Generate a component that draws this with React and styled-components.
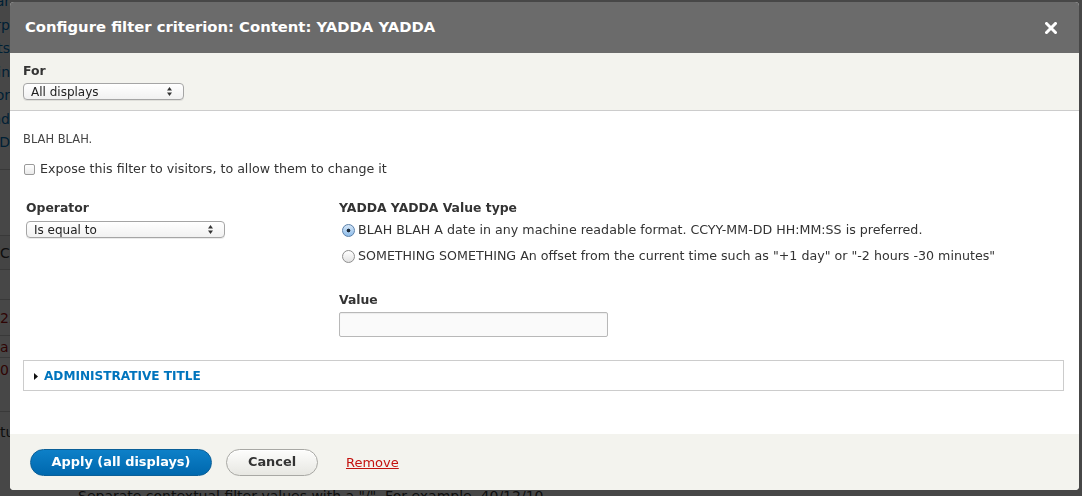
import React from 'react';
import styled, { createGlobalStyle } from 'styled-components';

const font = `"DejaVu Sans", "Noto Sans", "Liberation Sans", sans-serif`;

const Global = createGlobalStyle`
  html, body { margin: 0; padding: 0; background: #fff; }
  body { width: 1082px; height: 496px; overflow: hidden; font-family: ${font}; color: #333; }
  * { box-sizing: border-box; }
`;

/* ---------- page behind the modal ---------- */
const Page = styled.div`
  width: 1082px;
  height: 496px;
  display: grid;
  grid-template-columns: 10px 1fr;
  background: #fff;
  overflow: hidden;
`;
const SideColumn = styled.div`
  overflow: hidden;
  display: flex;
  flex-direction: column;
  font-size: 14px;
  margin-top: -10px;
`;
const SideLink = styled.div`
  height: 23.5px;
  line-height: 23.5px;
  white-space: nowrap;
  direction: rtl;
  color: #0074bd;
`;
const SideTab = styled.div`
  margin-top: ${p => p.$top || 0}px;
  height: ${p => p.$h || 24}px;
  line-height: ${p => p.$h || 24}px;
  background: ${p => p.$bg || 'transparent'};
  border-top: 1px solid #ccc;
  white-space: nowrap;
  color: ${p => p.$color || '#333'};
  font-size: 14px;
`;
const MainColumn = styled.div`
  display: flex;
  flex-direction: column;
  justify-content: flex-end;
  padding-left: 68px;
`;
const PageNote = styled.p`
  margin: 0 0 -9px;
  font-size: 14px;
  line-height: 18px;
  color: #333;
`;

const Overlay = styled.div`
  position: fixed;
  inset: 0;
  background: rgba(0, 0, 0, 0.72);
`;

/* ---------- dialog ---------- */
const Dialog = styled.div`
  position: fixed;
  left: 10px;
  top: 2px;
  width: 1069px;
  height: 488px;
  display: flex;
  flex-direction: column;
  background: #fff;
  border-radius: 4px;
  overflow: hidden;
`;
const Header = styled.header`
  flex: none;
  height: 51px;
  background: #6b6b6b;
  display: flex;
  align-items: center;
  justify-content: space-between;
  padding: 0 22px 0 15px;
`;
const Title = styled.h1`
  margin: 0;
  color: #fff;
  font: bold 14.8px/1 ${font};
`;
const CloseButton = styled.button`
  border: 0;
  background: none;
  padding: 0;
  width: 12px;
  height: 12px;
  display: flex;
`;

const ForBar = styled.div`
  flex: none;
  height: 58px;
  background: #f3f3ee;
  border-bottom: 1px solid #ccc;
  padding: 9px 13px 0;
`;
const FieldLabel = styled.label`
  display: block;
  height: 18px;
  font: bold 12.4px/18px ${font};
  color: #333;
`;

const SelectWrap = styled.div`
  position: relative;
  margin-top: ${p => p.$mt || 0}px;
  width: ${p => p.$w}px;
  height: 17px;
`;
const Select = styled.select`
  appearance: none;
  -webkit-appearance: none;
  display: block;
  width: 100%;
  height: 17px;
  margin: 0;
  padding: 1px 20px 0 7px;
  border: 1px solid #a5a5a5;
  border-radius: 4px;
  background: linear-gradient(#ffffff, #f1f1f1);
  box-shadow: 0 1px 0 rgba(0, 0, 0, 0.08);
  font: 12px/15px ${font};
  color: #222;
  outline: none;
`;
const SelectArrows = styled.svg`
  position: absolute;
  right: 12px;
  top: 4px;
  pointer-events: none;
`;

const Body = styled.div`
  flex: 1;
  padding: 19px 14px 0 13px;
  display: flex;
  flex-direction: column;
`;
const Description = styled.p`
  margin: 0;
  font: 11.5px/18px ${font};
  color: #444;
`;
const CheckRow = styled.label`
  margin-top: 12px;
  height: 18px;
  display: flex;
  align-items: center;
  gap: 5px;
  font: 12.65px/18px ${font};
  color: #333;
`;
const Checkbox = styled.input.attrs({ type: 'checkbox' })`
  appearance: none;
  -webkit-appearance: none;
  margin: 0 0 0 1px;
  width: 11px;
  height: 11px;
  border: 1px solid #9a9a9a;
  border-radius: 2px;
  background: linear-gradient(#fff, #e9e9e9);
`;

const Columns = styled.div`
  margin-top: 21px;
  padding-left: 3px;
  display: grid;
  grid-template-columns: 313px 1fr;
`;
const Column = styled.div`
  display: flex;
  flex-direction: column;
`;
const RadioRow = styled.label`
  height: 26px;
  display: flex;
  align-items: center;
  gap: 3px;
  padding-left: 3px;
  font: 12.65px/18px ${font};
  color: #333;
  white-space: nowrap;
`;
const Radio = styled.input.attrs({ type: 'radio' })`
  appearance: none;
  -webkit-appearance: none;
  margin: 0;
  width: 13px;
  height: 13px;
  flex: none;
  border-radius: 50%;
  border: 1px solid #8e8e8e;
  background: linear-gradient(#ffffff, #e2e2e2);
  &:checked {
    border-color: #5a7fa8;
    background: radial-gradient(circle at 50% 50%, #1b2a3a 0 1.6px, transparent 2.2px),
      linear-gradient(#d4e6f8, #8fbdea);
  }
`;
const TextInput = styled.input`
  margin-top: 3px;
  width: 269px;
  height: 25px;
  border: 1px solid #b8b8b8;
  border-radius: 2px;
  background: #fafafa;
  box-shadow: inset 0 1px 1px rgba(0, 0, 0, 0.06);
  font: 13px ${font};
  padding: 0 6px;
`;
const Gap = styled.div`
  height: ${p => p.$h}px;
  flex: none;
`;

const Details = styled.details`
  margin-top: 23px;
  margin-right: 1px;
  height: 31px;
  flex: none;
  border: 1px solid #ccc;
`;
const Summary = styled.summary`
  list-style: none;
  height: 29px;
  display: flex;
  align-items: center;
  gap: 6px;
  padding: 2px 0 0 10px;
  font: bold 12.1px/1 ${font};
  color: #0074bd;
  text-transform: uppercase;
  &::-webkit-details-marker { display: none; }
`;

const Footer = styled.footer`
  flex: none;
  height: 56px;
  background: #f3f3ee;
  display: flex;
  align-items: center;
  padding: 0 20px;
`;
const Button = styled.button`
  height: 27px;
  margin-left: ${p => p.$ml || 0}px;
  width: ${p => p.$w}px;
  padding: 0;
  border-radius: 14px;
  font: bold 12.9px/1 ${font};
  border: 1px solid ${p => (p.$primary ? '#0a5f98' : '#a8a8a4')};
  color: ${p => (p.$primary ? '#fff' : '#333')};
  background: ${p =>
    p.$primary ? 'linear-gradient(#0d80c8, #0068ae)' : 'linear-gradient(#fdfdfc, #e7e7e2)'};
  box-shadow: ${p => (p.$primary ? 'none' : 'inset 0 1px 0 #fff')};
`;
const RemoveLink = styled.a`
  margin-left: 28px;
  font: 13px/1 ${font};
  color: #c4120f;
  text-decoration: underline;
`;

const Arrows = () => (
  <SelectArrows width="5" height="9" viewBox="0 0 5 9">
    <path d="M0 3.5 L2.5 0 L5 3.5 Z" fill="#333" />
    <path d="M0 5.5 L2.5 9 L5 5.5 Z" fill="#333" />
  </SelectArrows>
);

export default function App() {
  return (
    <>
      <Global />
      <Page>
        <SideColumn>
          <SideLink>Static Sidebar</SideLink>
          <SideLink>Corp</SideLink>
          <SideLink>Posts</SideLink>
          <SideLink>Main</SideLink>
          <SideLink>Editor</SideLink>
          <SideLink>Kind</SideLink>
          <SideLink>AD</SideLink>
          <SideTab $top={14} $h={30} />
          <SideTab $top={36} $h={34} $bg="#f4f4f4">Ca</SideTab>
          <SideTab $h={30} />
          <SideTab $h={36} $color="#a11">22</SideTab>
          <SideTab $h={22} $color="#a11">a</SideTab>
          <SideTab $h={24} $color="#a11">0</SideTab>
          <SideTab $top={30} $h={40}>tu</SideTab>
        </SideColumn>
        <MainColumn>
          <PageNote>Separate contextual filter values with a "/". For example, 40/12/10.</PageNote>
        </MainColumn>
      </Page>
      <Overlay />
      <Dialog role="dialog">
        <Header>
          <Title>Configure filter criterion: Content: YADDA YADDA</Title>
          <CloseButton aria-label="Close">
            <svg width="12" height="12" viewBox="0 0 12 12">
              <path d="M1.5 1.5 L10.5 10.5 M10.5 1.5 L1.5 10.5" stroke="#fff" strokeWidth="3" strokeLinecap="square" />
            </svg>
          </CloseButton>
        </Header>
        <ForBar>
          <FieldLabel>For</FieldLabel>
          <SelectWrap $mt={3} $w={161}>
            <Select defaultValue="all">
              <option value="all">All displays</option>
            </Select>
            <Arrows />
          </SelectWrap>
        </ForBar>
        <Body>
          <Description>BLAH BLAH.</Description>
          <CheckRow>
            <Checkbox />
            Expose this filter to visitors, to allow them to change it
          </CheckRow>
          <Columns>
            <Column>
              <FieldLabel>Operator</FieldLabel>
              <SelectWrap $mt={4} $w={199}>
                <Select defaultValue="eq">
                  <option value="eq">Is equal to</option>
                </Select>
                <Arrows />
              </SelectWrap>
            </Column>
            <Column>
              <FieldLabel>YADDA YADDA Value type</FieldLabel>
              <RadioRow>
                <Radio name="vt" defaultChecked />
                BLAH BLAH A date in any machine readable format. CCYY-MM-DD HH:MM:SS is preferred.
              </RadioRow>
              <RadioRow>
                <Radio name="vt" />
                SOMETHING SOMETHING An offset from the current time such as "+1 day" or "-2 hours -30 minutes"
              </RadioRow>
              <Gap $h={22} />
              <FieldLabel>Value</FieldLabel>
              <TextInput type="text" />
            </Column>
          </Columns>
          <Details>
            <Summary>
              <svg width="4" height="7" viewBox="0 0 4 7">
                <path d="M0 0 L4 3.5 L0 7 Z" fill="#111" />
              </svg>
              Administrative title
            </Summary>
          </Details>
        </Body>
        <Footer>
          <Button $primary $w={182}>Apply (all displays)</Button>
          <Button $ml={14} $w={92}>Cancel</Button>
          <RemoveLink href="#">Remove</RemoveLink>
        </Footer>
      </Dialog>
    </>
  );
}
